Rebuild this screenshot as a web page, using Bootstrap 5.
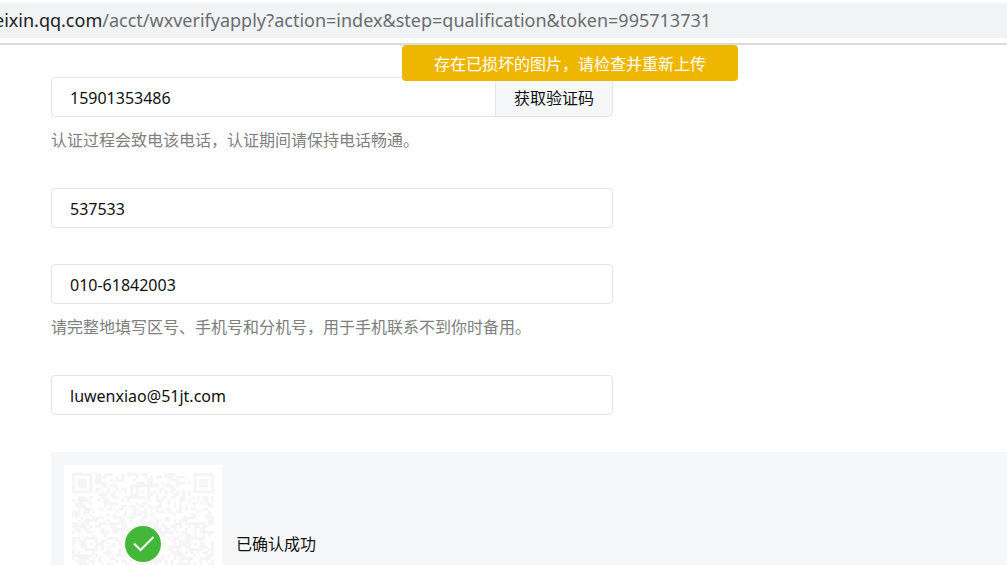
<!DOCTYPE html>
<html lang="zh-CN">
<head>
<meta charset="utf-8">
<meta name="viewport" content="width=device-width, initial-scale=1">
<title>微信认证</title>
<link href="https://cdn.jsdelivr.net/npm/bootstrap@5.3.0/dist/css/bootstrap.min.css" rel="stylesheet">
<style>
body { font: 16px/24px "Noto Sans", "Noto Sans CJK SC", sans-serif; color: #111; background: #fff; overflow: hidden; height: 100vh; }
.address-bar { padding: 3px 0 5px; border-bottom: 2px solid #dadcdc; }
.address { display: block; height: 35px; line-height: 35px; font-size: 18px; background: #f1f3f4; color: #696c70; white-space: nowrap; text-decoration: none; overflow: hidden; }
.address .host { color: #202124; }
.clipped { margin-left: -6px; }
.page-main { padding: 32px 0 0 51px; }
.fields { max-width: 562px; }
.field { margin-bottom: 36px; }
.field .form-control, .code-btn { height: 40px; padding: 2px 18px 0; font-size: 16px; line-height: 24px; border-color: #e4e4e6; border-radius: 4px; color: #111; }
.code-btn, .code-btn:hover { background: #f6f7f9; border-color: #e4e4e6; color: #111; }
.hint { color: #7e8081; margin-top: 11px; }
.toast-tip { position: absolute; z-index: 5; top: 45px; left: 402px; width: 336px; height: 36px; line-height: 38px; background: #efb600; color: #fff; border-radius: 4px; }
.result { background: #f6f7f9; border-radius: 4px 0 0 0; padding: 13px; gap: 14px; margin-top: 37px; }
.qr-box { background: #fff; width: 158px; height: 158px; padding: 8px; }
.qr-box .tick { position: absolute; left: 61px; top: 61px; }
</style>
</head>
<body>
<header class="address-bar">
<a class="address" href="#"><span class="host clipped">eixin.qq.com</span>/acct/wxverifyapply?action=index&amp;step=qualification&amp;token=995713731</a>
</header>
<div class="toast-tip text-center" role="alert">存在已损坏的图片，请检查并重新上传</div>
<main class="page-main">
<form class="fields">
<div class="field">
<div class="input-group">
<input class="form-control" type="tel" value="15901353486" aria-label="手机号码">
<button class="btn code-btn" type="button">获取验证码</button>
</div>
<div class="hint">认证过程会致电该电话，认证期间请保持电话畅通。</div>
</div>
<div class="field"><input class="form-control" type="text" value="537533" aria-label="短信验证码"></div>
<div class="field">
<input class="form-control" type="tel" value="010-61842003" aria-label="座机">
<div class="hint">请完整地填写区号、手机号和分机号，用于手机联系不到你时备用。</div>
</div>
<div class="field"><input class="form-control" type="email" value="luwenxiao@51jt.com" aria-label="邮箱"></div>
</form>
<section class="result d-flex align-items-center">
<div class="qr-box position-relative flex-shrink-0">
<svg width="142" height="142" viewBox="0 0 49 49" aria-hidden="true"><path id="qr" fill="#f5f5f5"/></svg>
<svg class="tick" width="36" height="36" viewBox="0 0 36 36" aria-label="成功"><circle cx="18" cy="18" r="18" fill="#43b738"/><path d="M9 17.5l6.500 6.500L28.500 11" fill="none" stroke="#fff" stroke-width="2"/></svg>
</div>
<div>已确认成功</div>
</section>
</main>
<script src="https://cdn.jsdelivr.net/npm/bootstrap@5.3.0/dist/js/bootstrap.bundle.min.js"></script>
<script>
// 49-module code: finder, alignment and timing marks around the data area
const N = 49, marks = [[3, 3, 4], [45, 3, 4], [3, 45, 4], [24, 6, 2], [6, 24, 2], [42, 24, 2], [24, 24, 2], [24, 42, 2], [42, 42, 2]];
let seed = 20177, d = '';
const bit = () => (seed = (seed * 1103515245 + 12345) % 2147483648) / 2147483648 < 0.5;
for (let y = 0; y < N; y++) for (let x = 0; x < N; x++) {
  let on = bit();
  if (x === 6) on = y % 2 === 0;
  if (y === 6) on = x % 2 === 0;
  for (const [cx, cy, r] of marks) {
    const k = Math.max(Math.abs(x - cx), Math.abs(y - cy));
    if (k <= r) on = r === 4 ? k !== 4 && k !== 2 : k !== 1;
  }
  if (on) d += `M${x} ${y}h1v1h-1z`;
}
document.getElementById('qr').setAttribute('d', d);
</script>
</body>
</html>
